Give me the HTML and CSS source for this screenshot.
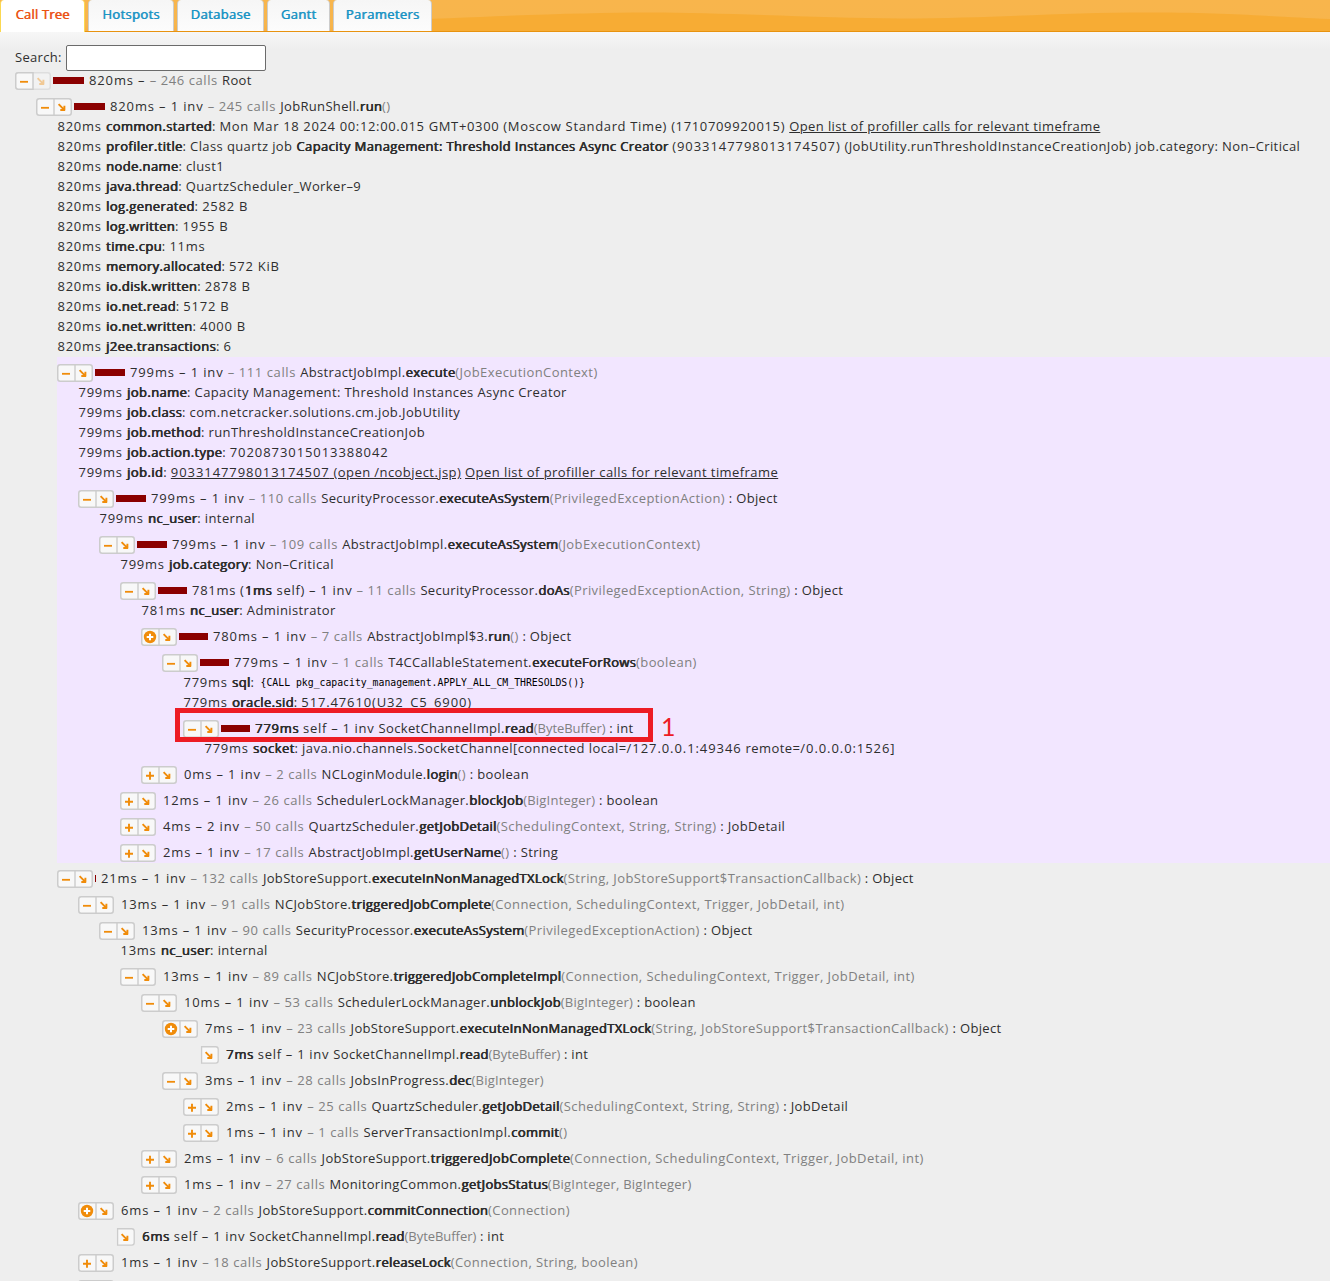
FILE: index.html
```html
<!DOCTYPE html>
<html lang="en">
<head>
<meta charset="utf-8">
<title>Call Tree</title>
<link rel="stylesheet" href="styles.css">
</head>
<body>
<svg class="defs" aria-hidden="true">
  <defs>
    <path id="arrow" d="M22.6 6.2 L28 11.6 M24.3 12 H29 M28.4 12.6 V7.8" fill="none" stroke="#f08c0a" stroke-width="1.9"/>
    <g id="frame"><rect x=".75" y=".75" width="34.5" height="16.5" rx="2.5" fill="#f8f8f8" stroke="#ccc" stroke-width="1.5"/><path d="M18 1V17" stroke="#ccc" stroke-width="1.4"/></g>
  </defs>
  <symbol id="m" viewBox="0 0 36 18"><use href="#frame"/><path d="M5 9.8H13" stroke="#f08c0a" stroke-width="1.8"/><use href="#arrow"/></symbol>
  <symbol id="p" viewBox="0 0 36 18"><use href="#frame"/><path d="M5 9.8H13M9 5.8V13.8" stroke="#f08c0a" stroke-width="1.9"/><use href="#arrow"/></symbol>
  <symbol id="o" viewBox="0 0 36 18"><use href="#frame"/><circle cx="9" cy="9" r="6.2" fill="#f08c0a"/><path d="M5.7 9H12.3M9 5.7V12.3" stroke="#fff" stroke-width="2"/><use href="#arrow"/></symbol>
  <symbol id="a" viewBox="0 0 36 18"><path d="M18.6 .75H32.7Q35.2 .75 35.2 3.2V14.8Q35.2 17.2 32.7 17.2H18.6Z" fill="#f8f8f8" stroke="#ccc" stroke-width="1.3"/><use href="#arrow"/></symbol>
  <symbol id="r" viewBox="0 0 36 18"><rect x=".75" y=".75" width="34.5" height="16.5" rx="2.5" fill="#f2f2f2" stroke="#dedede" stroke-width="1.5"/><path d="M18 .75H3.2Q.75 .75 .75 3.2V14.8Q.75 17.2 3.2 17.2H18Z" fill="#f8f8f8" stroke="#ccc" stroke-width="1.5"/><path d="M5 9.8H13" stroke="#f08c0a" stroke-width="1.8"/><g opacity=".4"><use href="#arrow"/></g></symbol>
</svg>
<header class="tabs">
  <svg class="wave" viewBox="0 0 1330 31" preserveAspectRatio="none"><path d="M380 21C500 16 580 12.5 650 12.5S820 18 900 18.5C1000 18 1060 12.5 1150 12.5S1270 17 1330 19V31H380Z" fill="#f7ac34"/></svg>
  <a class="tab active t1">Call Tree</a><a class="tab t2">Hotspots</a><a class="tab t3">Database</a><a class="tab t4">Gantt</a><a class="tab t5">Parameters</a>
</header>
<main>
<label class="search"><span>Search:</span><input type="text"></label>
<div class="node">
<div class="row"><svg class="b"><use href="#r"/></svg><i class="bar w31"></i><span class="h">820ms – <i>– 246 calls</i> </span>Root</div>
<div class="kids">
<div class="node">
<div class="row"><svg class="b"><use href="#m"/></svg><i class="bar w31"></i><span class="h">820ms – 1 inv <i>– 245 calls</i> </span>JobRunShell.<b>run</b><i>()</i></div>
<div class="kids">
<div class="prm"><span class="t">820ms </span><b>common.started</b>: <span class="n">Mon Mar 18 2024 00:12:00.015 GMT+0300 (Moscow Standard Time) (1710709920015) </span><a>Open list of profiller calls for relevant timeframe</a></div>
<div class="prm"><span class="t">820ms </span><b>profiler.title</b>: Class quartz job <b>Capacity Management: Threshold Instances Async Creator</b> <span class="n2">(9033147798013174507)</span> (JobUtility.runThresholdInstanceCreationJob) job.category: Non–Critical</div>
<div class="prm"><span class="t">820ms </span><b>node.name</b>: clust1</div>
<div class="prm"><span class="t">820ms </span><b>java.thread</b>: QuartzScheduler_Worker–9</div>
<div class="prm"><span class="t">820ms </span><b>log.generated</b>: <span class="t">2582 B</span></div>
<div class="prm"><span class="t">820ms </span><b>log.written</b>: <span class="t">1955 B</span></div>
<div class="prm"><span class="t">820ms </span><b>time.cpu</b>: <span class="t">11ms</span></div>
<div class="prm"><span class="t">820ms </span><b>memory.allocated</b>: <span class="t">572 KiB</span></div>
<div class="prm"><span class="t">820ms </span><b>io.disk.written</b>: <span class="t">2878 B</span></div>
<div class="prm"><span class="t">820ms </span><b>io.net.read</b>: <span class="t">5172 B</span></div>
<div class="prm"><span class="t">820ms </span><b>io.net.written</b>: <span class="t">4000 B</span></div>
<div class="prm"><span class="t">820ms </span><b>j2ee.transactions</b>: 6</div>
<div class="node hot">
<div class="row"><svg class="b"><use href="#m"/></svg><i class="bar w30"></i><span class="h">799ms – 1 inv <i>– 111 calls</i> </span>AbstractJobImpl.<b>execute</b><i>(JobExecutionContext)</i></div>
<div class="kids">
<div class="prm"><span class="t">799ms </span><b>job.name</b>: Capacity Management: Threshold Instances Async Creator</div>
<div class="prm"><span class="t">799ms </span><b>job.class</b>: com.netcracker.solutions.cm.job.JobUtility</div>
<div class="prm"><span class="t">799ms </span><b>job.method</b>: runThresholdInstanceCreationJob</div>
<div class="prm"><span class="t">799ms </span><b>job.action.type</b>: <span class="n2">7020873015013388042</span></div>
<div class="prm wide"><span class="t">799ms </span><b>job.id</b>: <a><span class="n2">9033147798013174507</span> (open /ncobject.jsp)</a> <a>Open list of profiller calls for relevant timeframe</a></div>
<div class="node">
<div class="row"><svg class="b"><use href="#m"/></svg><i class="bar w30"></i><span class="h">799ms – 1 inv <i>– 110 calls</i> </span>SecurityProcessor.<b>executeAsSystem</b><i>(PrivilegedExceptionAction)</i> : Object</div>
<div class="kids">
<div class="prm"><span class="t">799ms </span><b>nc_user</b>: internal</div>
<div class="node">
<div class="row"><svg class="b"><use href="#m"/></svg><i class="bar w30"></i><span class="h">799ms – 1 inv <i>– 109 calls</i> </span>AbstractJobImpl.<b>executeAsSystem</b><i>(JobExecutionContext)</i></div>
<div class="kids">
<div class="prm"><span class="t">799ms </span><b>job.category</b>: Non–Critical</div>
<div class="node">
<div class="row"><svg class="b"><use href="#m"/></svg><i class="bar w29"></i><span class="s">781ms (<b>1ms</b> self) – 1 inv <i>– 11 calls</i> </span>SecurityProcessor.<b>doAs</b><i>(PrivilegedExceptionAction, String)</i> : Object</div>
<div class="kids">
<div class="prm"><span class="t">781ms </span><b>nc_user</b>: Administrator</div>
<div class="node">
<div class="row"><svg class="b"><use href="#o"/></svg><i class="bar w29"></i><span class="h">780ms – 1 inv <i>– 7 calls</i> </span>AbstractJobImpl$3.<b>run</b><i>()</i> : Object</div>
<div class="kids">
<div class="node">
<div class="row"><svg class="b"><use href="#m"/></svg><i class="bar w29"></i><span class="h">779ms – 1 inv <i>– 1 calls</i> </span>T4CCallableStatement.<b>executeForRows</b><i>(boolean)</i></div>
<div class="kids">
<div class="prm"><span class="t">779ms </span><b>sql</b>: <code>{CALL pkg_capacity_management.APPLY_ALL_CM_THRESOLDS()}</code></div>
<div class="prm"><span class="t">779ms </span><b>oracle.sid</b>: <span class="h">517.47610(U32_C5_6900)</span></div>
<div class="node marked">
<div class="row"><svg class="b"><use href="#m"/></svg><i class="bar w29"></i><span class="s"><b>779ms</b> self – 1 inv </span>SocketChannelImpl.<b>read</b><i class="c">(ByteBuffer)</i> : int</div>
<div class="callout"></div><div class="callout-no">1</div>
<div class="kids">
<div class="prm wide"><span class="t">779ms </span><b>socket</b>: java.nio.channels.SocketChannel[connected local=<span class="n2">/127.0.0.1:49346</span> remote=<span class="n2">/0.0.0.0:1526]</span></div>
</div></div></div></div></div>
</div>
<div class="node">
<div class="row"><svg class="b"><use href="#p"/></svg><i class="bar"></i><span class="h">0ms – 1 inv <i>– 2 calls</i> </span>NCLoginModule.<b>login</b><i>()</i> : boolean</div>
</div>
</div></div>
<div class="row"><svg class="b"><use href="#p"/></svg><i class="bar"></i><span class="h">12ms – 1 inv <i>– 26 calls</i> </span>SchedulerLockManager.<b>blockJob</b><i class="d">(BigInteger)</i> : boolean</div>
<div class="row"><svg class="b"><use href="#p"/></svg><i class="bar"></i><span class="h">4ms – 2 inv <i>– 50 calls</i> </span>QuartzScheduler.<b>getJobDetail</b><i>(SchedulingContext, String, String)</i> : JobDetail</div>
<div class="row"><svg class="b"><use href="#p"/></svg><i class="bar"></i><span class="h">2ms – 1 inv <i>– 17 calls</i> </span>AbstractJobImpl.<b>getUserName</b><i>()</i> : String</div>
</div></div></div></div></div></div>
<div class="node">
<div class="row"><svg class="b"><use href="#m"/></svg><i class="bar w1"></i><span class="h">21ms – 1 inv <i>– 132 calls</i> </span>JobStoreSupport.<b>executeInNonManagedTXLock</b><i>(String, JobStoreSupport$TransactionCallback)</i> : Object</div>
<div class="kids">
<div class="row"><svg class="b"><use href="#m"/></svg><i class="bar"></i><span class="h">13ms – 1 inv <i>– 91 calls</i> </span>NCJobStore.<b>triggeredJobComplete</b><i>(Connection, SchedulingContext, Trigger, JobDetail, int)</i></div>
<div class="kids">
<div class="row"><svg class="b"><use href="#m"/></svg><i class="bar"></i><span class="h">13ms – 1 inv <i>– 90 calls</i> </span>SecurityProcessor.<b>executeAsSystem</b><i>(PrivilegedExceptionAction)</i> : Object</div>
<div class="kids">
<div class="prm"><span class="t">13ms </span><b>nc_user</b>: internal</div>
<div class="row"><svg class="b"><use href="#m"/></svg><i class="bar"></i><span class="h">13ms – 1 inv <i>– 89 calls</i> </span>NCJobStore.<b>triggeredJobCompleteImpl</b><i>(Connection, SchedulingContext, Trigger, JobDetail, int)</i></div>
<div class="kids">
<div class="row"><svg class="b"><use href="#m"/></svg><i class="bar"></i><span class="h">10ms – 1 inv <i>– 53 calls</i> </span>SchedulerLockManager.<b>unblockJob</b><i class="d">(BigInteger)</i> : boolean</div>
<div class="kids">
<div class="row"><svg class="b"><use href="#o"/></svg><i class="bar"></i><span class="h">7ms – 1 inv <i>– 23 calls</i> </span>JobStoreSupport.<b>executeInNonManagedTXLock</b><i>(String, JobStoreSupport$TransactionCallback)</i> : Object</div>
<div class="kids">
<div class="row"><svg class="b"><use href="#a"/></svg><i class="bar"></i><span class="s"><b>7ms</b> self – 1 inv </span>SocketChannelImpl.<b>read</b><i class="c">(ByteBuffer)</i> : int</div>
</div>
<div class="row"><svg class="b"><use href="#m"/></svg><i class="bar"></i><span class="h">3ms – 1 inv <i>– 28 calls</i> </span>JobsInProgress.<b>dec</b><i class="d">(BigInteger)</i></div>
<div class="kids">
<div class="row"><svg class="b"><use href="#p"/></svg><i class="bar"></i><span class="h">2ms – 1 inv <i>– 25 calls</i> </span>QuartzScheduler.<b>getJobDetail</b><i>(SchedulingContext, String, String)</i> : JobDetail</div>
<div class="row"><svg class="b"><use href="#p"/></svg><i class="bar"></i><span class="h">1ms – 1 inv <i>– 1 calls</i> </span>ServerTransactionImpl.<b>commit</b><i>()</i></div>
</div></div>
<div class="row"><svg class="b"><use href="#p"/></svg><i class="bar"></i><span class="h">2ms – 1 inv <i>– 6 calls</i> </span>JobStoreSupport.<b>triggeredJobComplete</b><i>(Connection, SchedulingContext, Trigger, JobDetail, int)</i></div>
<div class="row"><svg class="b"><use href="#p"/></svg><i class="bar"></i><span class="h">1ms – 1 inv <i>– 27 calls</i> </span>MonitoringCommon.<b>getJobsStatus</b><i class="d">(BigInteger, BigInteger)</i></div>
</div></div></div>
<div class="row"><svg class="b"><use href="#o"/></svg><i class="bar"></i><span class="h">6ms – 1 inv <i>– 2 calls</i> </span>JobStoreSupport.<b>commitConnection</b><i>(Connection)</i></div>
<div class="kids">
<div class="row"><svg class="b"><use href="#a"/></svg><i class="bar"></i><span class="s"><b>6ms</b> self – 1 inv </span>SocketChannelImpl.<b>read</b><i class="c">(ByteBuffer)</i> : int</div>
</div>
<div class="row"><svg class="b"><use href="#p"/></svg><i class="bar"></i><span class="h">1ms – 1 inv <i>– 18 calls</i> </span>JobStoreSupport.<b>releaseLock</b><i>(Connection, String, boolean)</i></div>
<div class="row"><svg class="b"><use href="#p"/></svg></div>
</div></div></div></div></div></div>
</main>
</body>
</html>
```
FILE: styles.css
```css
html{overflow:hidden}
body{margin:0;height:1281px;overflow:hidden;background:#eee;color:#2e2e2e;font:13px/18px "Open Sans","Noto Sans",sans-serif;letter-spacing:.39px}
.defs{position:absolute;width:0;height:0}
.tabs{position:relative;display:flex;height:31px;background:linear-gradient(#f8b54c,#f7b54c 80%,#f7b045);border-bottom:1px solid #e8930f}
.wave{position:absolute;left:0;top:0;width:100%;height:31px}
.tab{position:relative;box-sizing:border-box;height:31px;margin-right:3px;background:linear-gradient(#f6f6f6,#fcfcfc);border:1px solid #ccc;border-width:0 1px;color:#1c94c4;text-align:center;line-height:29px;border-radius:4px 4px 0 0;text-shadow:.6px 0 currentColor;letter-spacing:.35px}
.tab.active{height:32px;background:#fff;border-color:#fbd850;color:#eb5314;letter-spacing:.2px}
.t1{width:85px}
.t2{width:86px}
.t3{width:87px}
.t4{width:63px}
.t5{width:99px}
main{padding:12px 0 0 15px;background:linear-gradient(#f7f7f7,#eee 18px)}
.search{display:flex;align-items:center;height:27px}
.search span{width:47px;padding-bottom:2px;letter-spacing:.3px}
.search input{box-sizing:border-box;width:200px;height:26px;margin:0 0 0 4px;border:1px solid #6b6b6b;border-radius:2px;background:#fff}
main>.node{margin-top:-6px}
.kids{margin-left:21px}
.row{display:flex;padding-top:6px;height:20px;white-space:pre;letter-spacing:.33px}
.prm{height:20px;padding-left:.5px;white-space:pre}
.b{flex:none;width:36px;height:18px;margin-top:1px}
.bar{flex:none;height:7px;margin:6px 5px 0 2px;background:#8b0000}
.w31{width:31px}
.w30{width:30px}
.w29{width:29px}
.w1{width:1px}
b{font-weight:400;text-shadow:.6px 0 currentColor,.3px 0 currentColor}
i{font-style:normal;color:#808080}
.row>i{letter-spacing:.42px}
.row>.c{letter-spacing:-.05px}
.row>.d{letter-spacing:.22px}
.h{letter-spacing:.86px}
.h i{letter-spacing:.58px}
.s{letter-spacing:.7px}
.s i{letter-spacing:.55px}
.t{letter-spacing:.74px}
.n{letter-spacing:.65px}
.n2{letter-spacing:.93px}
.wide{letter-spacing:.43px}
a{text-decoration:underline}
.tab{text-decoration:none}
code{margin-left:2.5px;font:9.8px/16px "DejaVu Sans Mono",monospace;letter-spacing:0;color:#000;vertical-align:1px}
.hot{background:#f2e6ff}
.marked{position:relative}
.callout{position:absolute;box-sizing:border-box;left:-8px;top:-5px;width:478px;height:34px;border:5px solid #ed1c24}
.callout-no{position:absolute;left:478px;top:1px;color:#ed1c24;font:25px/24px Lato,sans-serif;letter-spacing:0}
```
